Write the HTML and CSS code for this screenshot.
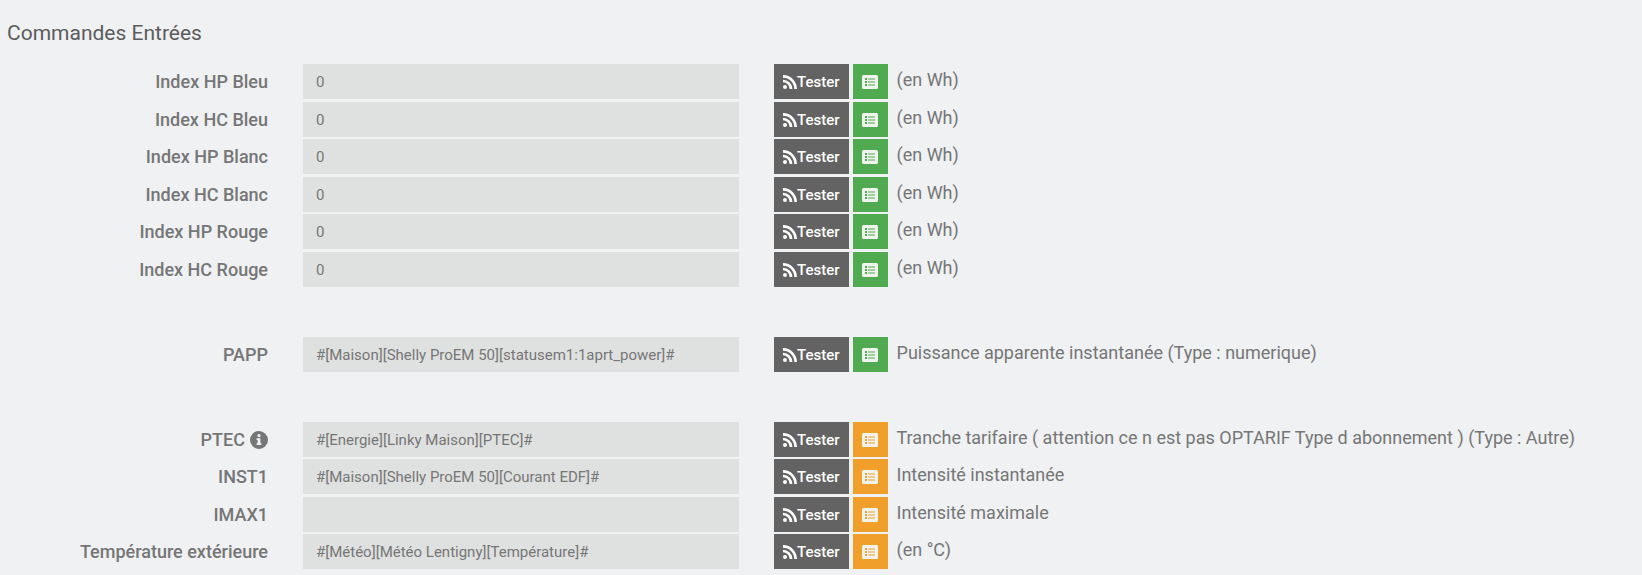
FILE: index.html
```html
<!DOCTYPE html>
<html lang="fr">
<head>
  <meta charset="UTF-8" />
  <title>Commandes Entrées</title>
  <link rel="stylesheet" href="styles.css">
</head>
<body>

  <!-- Shared icons -->
  <svg class="sprite" aria-hidden="true">
    <symbol id="rss" viewBox="0 0 14 14">
      <circle cx="2" cy="12" r="2" />
      <path d="M0 6a8 8 0 0 1 8 8M0 1.400a12.600 12.600 0 0 1 12.600 12.600" fill="none" stroke="currentColor" stroke-width="2.700" />
    </symbol>
    <symbol id="list" viewBox="0 0 16 14">
      <path fill-rule="evenodd" d="M1.500 0h13a1.500 1.500 0 0 1 1.500 1.500v11a1.500 1.500 0 0 1-1.500 1.500h-13a1.500 1.500 0 0 1-1.500-1.500v-11a1.500 1.500 0 0 1 1.500-1.500zM3 3v2h2v-2zM3 6v2h2v-2zM3 9v2h2v-2zM6 3.500v1h7v-1zM6 6.500v1h7v-1zM6 9.500v1h7v-1z" />
    </symbol>
    <symbol id="info" viewBox="0 0 18 18">
      <path fill-rule="evenodd" d="M9 0a9 9 0 1 1 0 18a9 9 0 1 1 0-18zM9 3a1.600 1.600 0 1 0 0 3.200a1.600 1.600 0 1 0 0-3.200zM6.600 7.300v1.800h1v3.200h-1v1.800h4.800v-1.800h-1v-5z" />
    </symbol>
  </svg>

  <form>
    <h1>Commandes Entrées</h1>

    <div class="row">
      <label for="hpBleu">Index HP Bleu</label>
      <input type="text" id="hpBleu" value="0">
      <div class="actions">
        <button type="button" class="btn"><svg class="rss"><use href="#rss" /></svg>Tester</button>
        <button type="button" class="btn pick green" aria-label="Choisir"><svg class="list"><use href="#list" /></svg></button>
        <span class="desc">(en Wh)</span>
      </div>
    </div>
    <div class="row">
      <label for="hcBleu">Index HC Bleu</label>
      <input type="text" id="hcBleu" value="0">
      <div class="actions">
        <button type="button" class="btn"><svg class="rss"><use href="#rss" /></svg>Tester</button>
        <button type="button" class="btn pick green" aria-label="Choisir"><svg class="list"><use href="#list" /></svg></button>
        <span class="desc">(en Wh)</span>
      </div>
    </div>
    <div class="row">
      <label for="hpBlanc">Index HP Blanc</label>
      <input type="text" id="hpBlanc" value="0">
      <div class="actions">
        <button type="button" class="btn"><svg class="rss"><use href="#rss" /></svg>Tester</button>
        <button type="button" class="btn pick green" aria-label="Choisir"><svg class="list"><use href="#list" /></svg></button>
        <span class="desc">(en Wh)</span>
      </div>
    </div>
    <div class="row">
      <label for="hcBlanc">Index HC Blanc</label>
      <input type="text" id="hcBlanc" value="0">
      <div class="actions">
        <button type="button" class="btn"><svg class="rss"><use href="#rss" /></svg>Tester</button>
        <button type="button" class="btn pick green" aria-label="Choisir"><svg class="list"><use href="#list" /></svg></button>
        <span class="desc">(en Wh)</span>
      </div>
    </div>
    <div class="row">
      <label for="hpRouge">Index HP Rouge</label>
      <input type="text" id="hpRouge" value="0">
      <div class="actions">
        <button type="button" class="btn"><svg class="rss"><use href="#rss" /></svg>Tester</button>
        <button type="button" class="btn pick green" aria-label="Choisir"><svg class="list"><use href="#list" /></svg></button>
        <span class="desc">(en Wh)</span>
      </div>
    </div>
    <div class="row">
      <label for="hcRouge">Index HC Rouge</label>
      <input type="text" id="hcRouge" value="0">
      <div class="actions">
        <button type="button" class="btn"><svg class="rss"><use href="#rss" /></svg>Tester</button>
        <button type="button" class="btn pick green" aria-label="Choisir"><svg class="list"><use href="#list" /></svg></button>
        <span class="desc">(en Wh)</span>
      </div>
    </div>

    <div class="row first">
      <label for="papp">PAPP</label>
      <input type="text" id="papp" value="#[Maison][Shelly ProEM 50][statusem1:1aprt_power]#">
      <div class="actions">
        <button type="button" class="btn"><svg class="rss"><use href="#rss" /></svg>Tester</button>
        <button type="button" class="btn pick green" aria-label="Choisir"><svg class="list"><use href="#list" /></svg></button>
        <span class="desc">Puissance apparente instantanée (Type : numerique)</span>
      </div>
    </div>

    <div class="row first">
      <label for="ptec">PTEC <svg class="info"><use href="#info" /></svg></label>
      <input type="text" id="ptec" value="#[Energie][Linky Maison][PTEC]#">
      <div class="actions">
        <button type="button" class="btn"><svg class="rss"><use href="#rss" /></svg>Tester</button>
        <button type="button" class="btn pick orange" aria-label="Choisir"><svg class="list"><use href="#list" /></svg></button>
        <span class="desc">Tranche tarifaire ( attention ce n est pas OPTARIF Type d abonnement ) (Type : Autre)</span>
      </div>
    </div>
    <div class="row">
      <label for="inst1">INST1</label>
      <input type="text" id="inst1" value="#[Maison][Shelly ProEM 50][Courant EDF]#">
      <div class="actions">
        <button type="button" class="btn"><svg class="rss"><use href="#rss" /></svg>Tester</button>
        <button type="button" class="btn pick orange" aria-label="Choisir"><svg class="list"><use href="#list" /></svg></button>
        <span class="desc">Intensité instantanée</span>
      </div>
    </div>
    <div class="row">
      <label for="imax1">IMAX1</label>
      <input type="text" id="imax1" value="">
      <div class="actions">
        <button type="button" class="btn"><svg class="rss"><use href="#rss" /></svg>Tester</button>
        <button type="button" class="btn pick orange" aria-label="Choisir"><svg class="list"><use href="#list" /></svg></button>
        <span class="desc">Intensité maximale</span>
      </div>
    </div>
    <div class="row">
      <label for="temp">Température extérieure</label>
      <input type="text" id="temp" value="#[Météo][Météo Lentigny][Température]#">
      <div class="actions">
        <button type="button" class="btn"><svg class="rss"><use href="#rss" /></svg>Tester</button>
        <button type="button" class="btn pick orange" aria-label="Choisir"><svg class="list"><use href="#list" /></svg></button>
        <span class="desc">(en °C)</span>
      </div>
    </div>
  </form>

</body>
</html>
```
FILE: styles.css
```css
body {
  margin: 0;
  background: #eff1f3;
  color: #767676;
  font-family: Roboto, sans-serif;
  font-size: 18px;
}
.sprite {
  display: none;
}
svg {
  fill: currentColor;
}
h1 {
  margin: 0;
  padding: 18px 7px 16px;
  color: #5c5c5c;
  font-size: 21px;
  font-weight: 400;
  line-height: 30px;
}
.row {
  display: grid;
  grid-template-columns: 67fr 109fr 217fr;
  column-gap: 35px;
  margin-bottom: 3px;
}
.row:nth-of-type(even) {
  margin-bottom: 2px;
}
.row.first {
  margin-top: 50px;
}
label {
  display: flex;
  justify-content: flex-end;
  align-items: center;
  gap: 5px;
  font-weight: 500;
}
input {
  min-width: 0;
  height: 35px;
  box-sizing: border-box;
  padding: 0 13px;
  border: none;
  background: #dfe1e0;
  color: #767676;
  font-family: inherit;
  font-size: 15px;
}
.actions {
  display: flex;
  gap: 4px;
}
.btn {
  display: flex;
  flex: none;
  align-items: center;
  justify-content: center;
  height: 35px;
  padding: 0 9px;
  border: none;
  background: #636363;
  color: #fff;
  font-family: inherit;
  font-size: 15px;
  font-weight: 500;
}
.pick {
  width: 35px;
  color: #f1f3ee;
}
.green {
  background: #50aa50;
}
.orange {
  background: #f0a02a;
}
.desc {
  padding-left: 5px;
  line-height: 31px;
}
.rss {
  width: 14px;
  height: 14px;
}
.list {
  width: 16px;
  height: 14px;
}
.info {
  width: 18px;
  height: 18px;
}
```
